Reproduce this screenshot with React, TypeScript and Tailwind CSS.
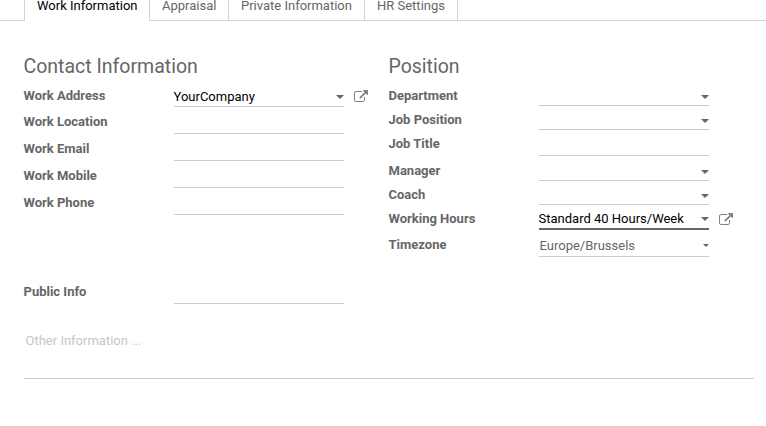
import clsx from "clsx";
import type { ReactNode } from "react";

type FieldKind = "many2one" | "char" | "select";

interface FieldProps {
  label: string;
  kind?: FieldKind;
  value?: string;
  focused?: boolean;
  link?: boolean;
  className: string;
  labelClass?: string;
  caretClass?: string;
}

const tabs = [
  { name: "Work Information", width: "w-[126px]" },
  { name: "Appraisal", width: "w-[79px]" },
  { name: "Private Information", width: "w-[136px]" },
  { name: "HR Settings", width: "w-[93px]" },
];

function ExternalLink() {
  return (
    <svg viewBox="0 0 1792 1792" className="h-[14px] w-[14px]" fill="#7c8287">
      <path d="M1408 928v320q0 119-84.5 203.5t-203.5 84.5h-832q-119 0-203.5-84.5t-84.5-203.5v-832q0-119 84.5-203.5t203.5-84.5h704q14 0 23 9t9 23v64q0 14-9 23t-23 9h-704q-66 0-113 47t-47 113v832q0 66 47 113t113 47h832q66 0 113-47t47-113v-320q0-14 9-23t23-9h64q14 0 23 9t9 23zm384-864v512q0 26-19 45t-45 19-45-19l-176-176-652 652q-10 10-23 10t-23-10l-114-114q-10-10-10-23t10-23l652-652-176-176q-19-19-19-45t19-45 45-19h512q26 0 45 19t19 45z" />
    </svg>
  );
}

function Caret({ small }: { small?: boolean }) {
  return small ? (
    <svg viewBox="0 0 6 3" className="mb-[9px] h-[3px] w-[6px]" fill="#666666">
      <path d="M0 0h6L3 3z" />
    </svg>
  ) : (
    <svg viewBox="0 0 8 4" className="h-[4px] w-[8px]" fill="#666666">
      <path d="M0 0h8L4 4z" />
    </svg>
  );
}

function Field({
  label,
  kind = "char",
  value,
  focused,
  link,
  className,
  labelClass = "pt-[5px]",
  caretClass = "pb-[6px]",
}: FieldProps) {
  return (
    <div className={clsx("flex", className)}>
      <label className={clsx("w-[150px] leading-5 font-bold", labelClass)}>{label}</label>
      <div
        className={clsx(
          "flex w-[170px] items-end justify-between",
          focused ? "border-b-2 border-[#666666]" : "border-b border-[#cccccc]"
        )}
      >
        <span
          className={clsx(
            "whitespace-nowrap",
            kind === "select" ? "pl-px leading-5 text-[#666666]" : "leading-[18px] text-black"
          )}
        >
          {value}
        </span>
        {kind === "many2one" && (
          <span className={caretClass}>
            <Caret />
          </span>
        )}
        {kind === "select" && <Caret small />}
      </div>
      {link && (
        <span className="ml-[10px] pt-[7.5px]">
          <ExternalLink />
        </span>
      )}
    </div>
  );
}

function Group({ title, children }: { title: string; children: ReactNode }) {
  return (
    <section className="w-[365px]">
      <h2 className="mb-[3px] h-[25px] text-[19.5px] leading-[25px]">{title}</h2>
      {children}
    </section>
  );
}

export default function App() {
  return (
    <main className="h-[426px] overflow-hidden bg-white font-[Roboto,sans-serif] text-[13px] text-[#666666]">
      <nav className="flex h-[21px]">
        <div className="w-6 border-b border-[#ced4da]" />
        {tabs.map(({ name, width }, i) => (
          <div
            key={name}
            className={clsx(
              "h-[21px] border-r border-[#ced4da] pl-3 leading-[12px] whitespace-nowrap",
              width,
              i === 0 ? "border-l text-black" : "border-b"
            )}
          >
            {name}
          </div>
        ))}
        <div className="flex-1 border-b border-[#ced4da]" />
      </nav>

      <div className="flex pt-[33px] pl-[23.5px]">
        <Group title="Contact Information">
          <Field
            label="Work Address"
            kind="many2one"
            value="YourCompany"
            link
            className="h-[25px]"
            labelClass="pt-1"
            caretClass="pb-[7px]"
          />
          <Field label="Work Location" className="h-[27px]" />
          <Field label="Work Email" className="h-[27px]" />
          <Field label="Work Mobile" className="h-[27px]" />
          <Field label="Work Phone" className="h-[27px]" />
        </Group>
        <Group title="Position">
          <Field label="Department" kind="many2one" className="h-[24px]" labelClass="pt-1" />
          <Field label="Job Position" kind="many2one" className="h-[24px]" labelClass="pt-1" />
          <Field label="Job Title" className="h-[26px]" labelClass="pt-1" />
          <Field label="Manager" kind="many2one" className="h-[25px]" />
          <Field label="Coach" kind="many2one" className="h-[24px]" labelClass="pt-1" />
          <Field
            label="Working Hours"
            kind="many2one"
            value="Standard 40 Hours/Week"
            focused
            link
            className="h-[25px]"
            labelClass="pt-1"
            caretClass="pb-[7px]"
          />
          <Field label="Timezone" kind="select" value="Europe/Brussels" className="h-[27px]" />
        </Group>
      </div>

      <div className="pt-5 pr-3 pl-[23.5px]">
        <Field label="Public Info" className="h-[27px]" />
        <div className="mt-[26px] h-[49px] border-b border-[#cccccc] pt-px pl-[2px] leading-5 text-[#c6c6c6]">
          Other Information ...
        </div>
      </div>
    </main>
  );
}
